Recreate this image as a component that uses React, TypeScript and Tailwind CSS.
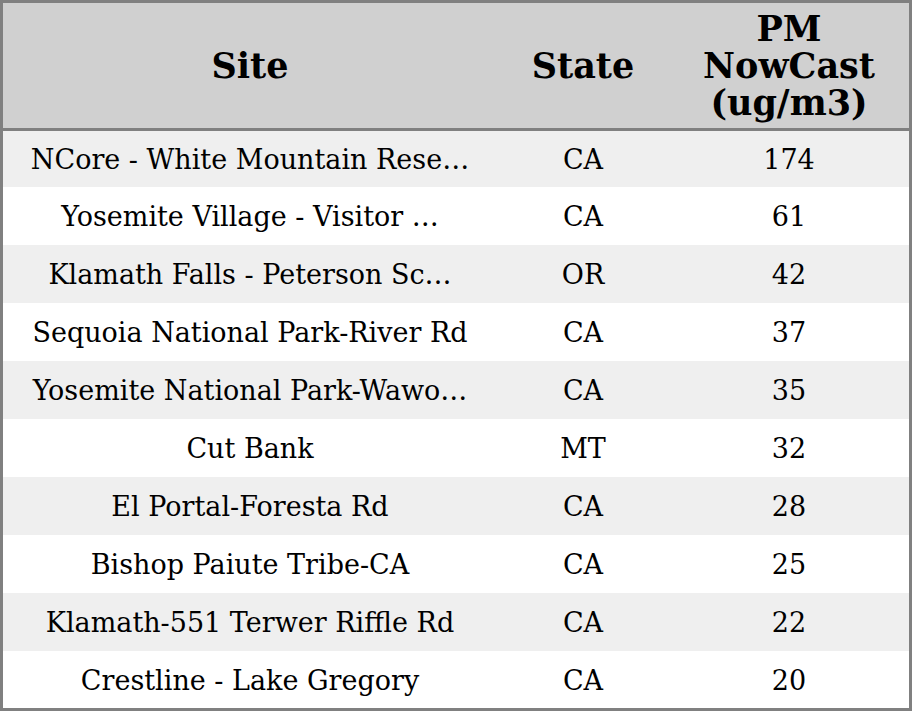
const rows = [
  { site: 'NCore - White Mountain Rese…', state: 'CA', pm: 174 },
  { site: 'Yosemite Village - Visitor …', state: 'CA', pm: 61 },
  { site: 'Klamath Falls - Peterson Sc…', state: 'OR', pm: 42 },
  { site: 'Sequoia National Park-River Rd', state: 'CA', pm: 37 },
  { site: 'Yosemite National Park-Wawo…', state: 'CA', pm: 35 },
  { site: 'Cut Bank', state: 'MT', pm: 32 },
  { site: 'El Portal-Foresta Rd', state: 'CA', pm: 28 },
  { site: 'Bishop Paiute Tribe-CA', state: 'CA', pm: 25 },
  { site: 'Klamath-551 Terwer Riffle Rd', state: 'CA', pm: 22 },
  { site: 'Crestline - Lake Gregory', state: 'CA', pm: 20 },
];

export default function App() {
  return (
    <div className="w-[912px] h-[711px] border-[3px] border-[#808080] bg-white text-black font-['DejaVu_Serif',serif] flex flex-col">
      {/* header */}
      <div className="h-[128px] shrink-0 flex bg-[#d0d0d0] border-b-[3px] border-[#808080] font-bold text-[35px] leading-[37px] text-center">
        <div className="w-[494px] flex items-center justify-center">Site</div>
        <div className="w-[172px] flex items-center justify-center">State</div>
        <div className="flex-1 flex items-center justify-center">
          PM
          <br />
          NowCast
          <br />
          (ug/m3)
        </div>
      </div>

      {/* rows */}
      {rows.map((r, i) => (
        <div
          key={r.site}
          className={`flex items-center pt-[3px] text-[27px] text-center ${i % 2 === 0 ? 'bg-[#efefef]' : 'bg-white'} ${
            i === 0 ? 'h-[56px]' : i === rows.length - 1 ? 'h-[57px]' : 'h-[58px]'
          }`}
        >
          <div className="w-[494px]">{r.site}</div>
          <div className="w-[172px]">{r.state}</div>
          <div className="flex-1">{r.pm}</div>
        </div>
      ))}
    </div>
  );
}
